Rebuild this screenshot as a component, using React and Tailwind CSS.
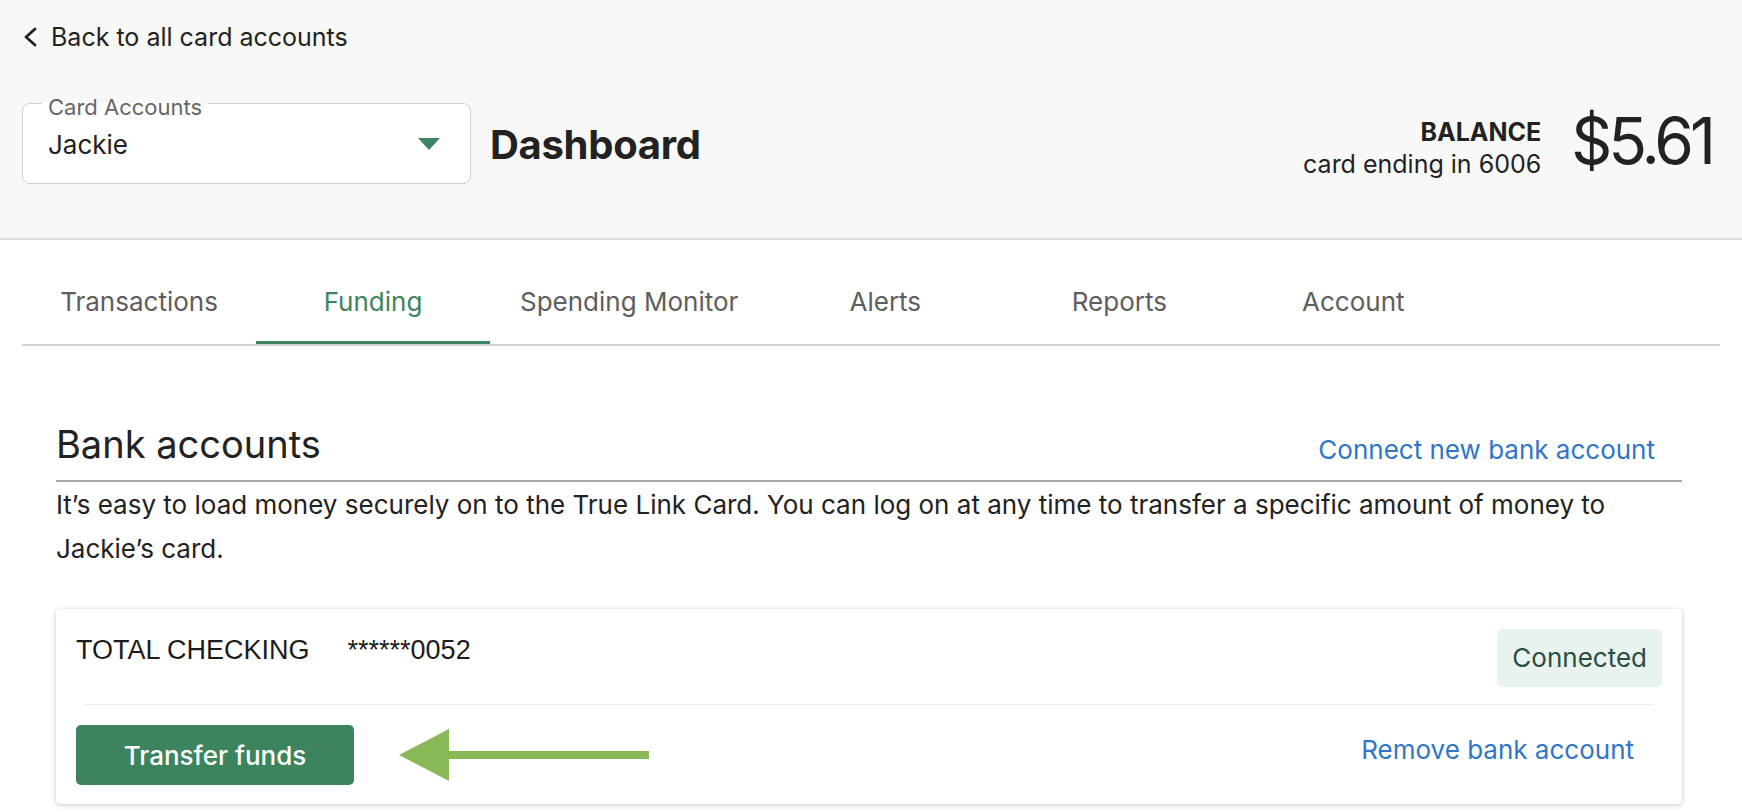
import React from 'react';

const tabs = ['Transactions', 'Funding', 'Spending Monitor', 'Alerts', 'Reports', 'Account'];

const Header = () => (
  <header className="h-[240px] border-b-2 border-[#dcdcdc] bg-[#f8f8f7] px-[22px]">
    <a href="#" className="flex items-center gap-[13px] pt-[22px] text-[25px] leading-[30px] text-[#222]">
      <svg width="15" height="20" viewBox="0 0 15 20" className="ml-[1px]">
        <polyline points="12,2 3,10 12,18" fill="none" stroke="#222" strokeWidth="2.8" strokeLinecap="round" strokeLinejoin="round" />
      </svg>
      Back to all card accounts
    </a>
    <div className="mt-[51px] flex items-center">
      <div className="relative flex h-[81px] w-[449px] items-center justify-between rounded-[8px] border border-[#cfcfcf] bg-white pl-[25px] pr-[30px]">
        <span className="absolute left-[19px] top-[-10px] bg-[linear-gradient(to_bottom,#f8f8f7_35%,#fff_35%)] px-[6px] text-[22px] leading-[26px] text-[#666]">
          Card Accounts
        </span>
        <span className="mt-[2px] text-[26px] text-[#222]">Jackie</span>
        <svg width="22" height="12" viewBox="0 0 22 12">
          <polygon points="0,0 22,0 11,12" fill="#3c8560" />
        </svg>
      </div>
      <h1 className="ml-[19px] mt-[3px] text-[40px] font-bold tracking-[-0.3px] text-[#222]">Dashboard</h1>
      <div className="flex-1" />
      <div className="mr-[8px] flex items-center gap-[30px]">
        <div className="mt-[8px] text-right leading-[32px]">
          <div className="text-[25px] font-bold text-[#222]">BALANCE</div>
          <div className="text-[25px] text-[#222]">card ending in 6006</div>
        </div>
        <div className="mb-[6px] text-[64px] font-normal leading-none tracking-[-4px] text-[#222]">$5.61</div>
      </div>
    </div>
  </header>
);

const Tabs = () => (
  <nav className="mx-[22px] mt-[22px] flex border-b-2 border-[#d2d2d2]">
    {tabs.map((t) => (
      <div
        key={t}
        className={
          t === 'Funding'
            ? 'flex h-[82px] min-w-[234px] items-center justify-center border-b-[3px] border-[#3c8560] px-[30px] text-[26px] text-[#3c8560]'
            : 'flex h-[82px] min-w-[234px] items-center justify-center border-b-[3px] border-transparent px-[30px] text-[26px] text-[#5e5e5e]'
        }
      >
        {t}
      </div>
    ))}
  </nav>
);

const BankCard = () => (
  <div className="mt-[38px] rounded-[4px] bg-white px-[20px] pb-[19px] pt-[20px] shadow-[0_1px_5px_rgba(0,0,0,0.22)]">
    <div className="flex items-start justify-between">
      <div className="flex gap-[38px] font-['Liberation_Sans',Arial,sans-serif] text-[27px] leading-[42px] text-[#1c1c1c]">
        <span>TOTAL CHECKING</span>
        <span>******0052</span>
      </div>
      <span className="rounded-[5px] bg-[#e8f2ee] px-[15px] py-[13px] text-[26px] leading-[32px] text-[#2b4e3f]">
        Connected
      </span>
    </div>
    <div className="mx-[8px] mt-[17px] border-t border-[#ececec]" />
    <div className="mt-[20px] flex items-center justify-between">
      <div className="flex items-center">
        <button className="h-[60px] w-[278px] rounded-[5px] bg-[#3c845e] text-[26px] font-medium text-white">
          Transfer funds
        </button>
        <svg width="252" height="52" viewBox="0 0 252 52" className="ml-[45px]">
          <polygon points="0,26 50,0 50,52" fill="#88b956" />
          <rect x="48" y="22" width="202" height="8" fill="#88b956" />
        </svg>
      </div>
      <a href="#" className="mb-[12px] mr-[28px] text-[26px] text-[#2f76c8]">
        Remove bank account
      </a>
    </div>
  </div>
);

export default function App() {
  return (
    <div className="min-h-screen bg-white font-['Inter',sans-serif] text-[#222]">
      <Header />
      <Tabs />
      <main className="mx-[56px] mr-[60px] pt-[76px]">
        <div className="flex items-end justify-between border-b-2 border-[#aaaaaa] pb-[14px]">
          <h2 className="text-[38px] leading-[44px] text-[#222]">Bank accounts</h2>
          <a href="#" className="mr-[27px] text-[26px] leading-[32px] text-[#2f76c8]">
            Connect new bank account
          </a>
        </div>
        <p className="mt-[1px] text-[26px] leading-[44px] text-[#222]">
          It’s easy to load money securely on to the True Link Card. You can log on at any time to transfer a specific amount of money to Jackie’s card.
        </p>
        <BankCard />
      </main>
    </div>
  );
}
